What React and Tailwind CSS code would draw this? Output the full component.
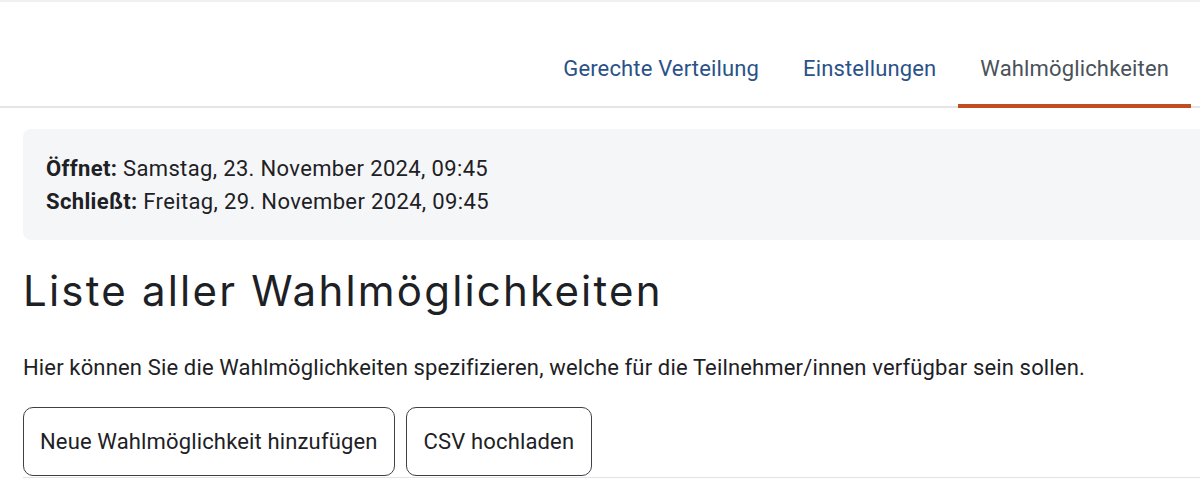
export default function App() {
  const tabs = [
    { label: 'Gerechte Verteilung', active: false },
    { label: 'Einstellungen', active: false },
    { label: 'Wahlmöglichkeiten', active: true },
  ];

  return (
    <div className="w-[1200px] h-[487px] overflow-hidden bg-white text-[#1d2125] font-['Roboto',sans-serif] tracking-[0.15px] border-t-2 border-[#f0f0f0]">
      {/* Secondary navigation */}
      <nav className="h-[106px] flex justify-end items-end border-b-2 border-[#e5e5e7] pr-[9px]">
        {tabs.map((t) => (
          <a
            key={t.label}
            href="#"
            className={`-mb-[2px] px-[22px] pb-[20px] text-[22px] leading-[30px] border-b-[4px] ${
              t.active ? 'border-[#c14d1e] text-[#4a5159]' : 'border-transparent text-[#2b5288]'
            }`}
          >
            {t.label}
          </a>
        ))}
      </nav>

      <main className="pl-[23px]">
        {/* Dates box */}
        <div className="mt-[21px] w-[1200px] h-[111px] rounded-lg bg-[#f5f6f8] pl-[23px] pt-[23px] text-[22px] leading-[33px] tracking-[0.35px]">
          <div><strong className="font-bold">Öffnet:</strong> Samstag, 23. November 2024, 09:45</div>
          <div><strong className="font-bold">Schließt:</strong> Freitag, 29. November 2024, 09:45</div>
        </div>

        <h2 className="mt-[24px] text-[42px] leading-[54px] font-normal font-['Inter',sans-serif] tracking-[2.2px] text-[#1d2125]">
          Liste aller Wahlmöglichkeiten
        </h2>

        <p className="mt-[35px] text-[22px] leading-[30px]">
          Hier können Sie die Wahlmöglichkeiten spezifizieren, welche für die Teilnehmer/innen verfügbar sein sollen.
        </p>

        <div className="mt-[24px] flex gap-[11px] border-b border-[#e3e3e3] pb-[1px]">
          <button className="h-[69px] px-[16px] rounded-[10px] border border-[#3c4148] text-[22px] text-[#1d2125]">
            Neue Wahlmöglichkeit hinzufügen
          </button>
          <button className="h-[69px] px-[17px] rounded-[10px] border border-[#3c4148] text-[22px] text-[#1d2125]">
            CSV hochladen
          </button>
        </div>
      </main>
    </div>
  );
}
